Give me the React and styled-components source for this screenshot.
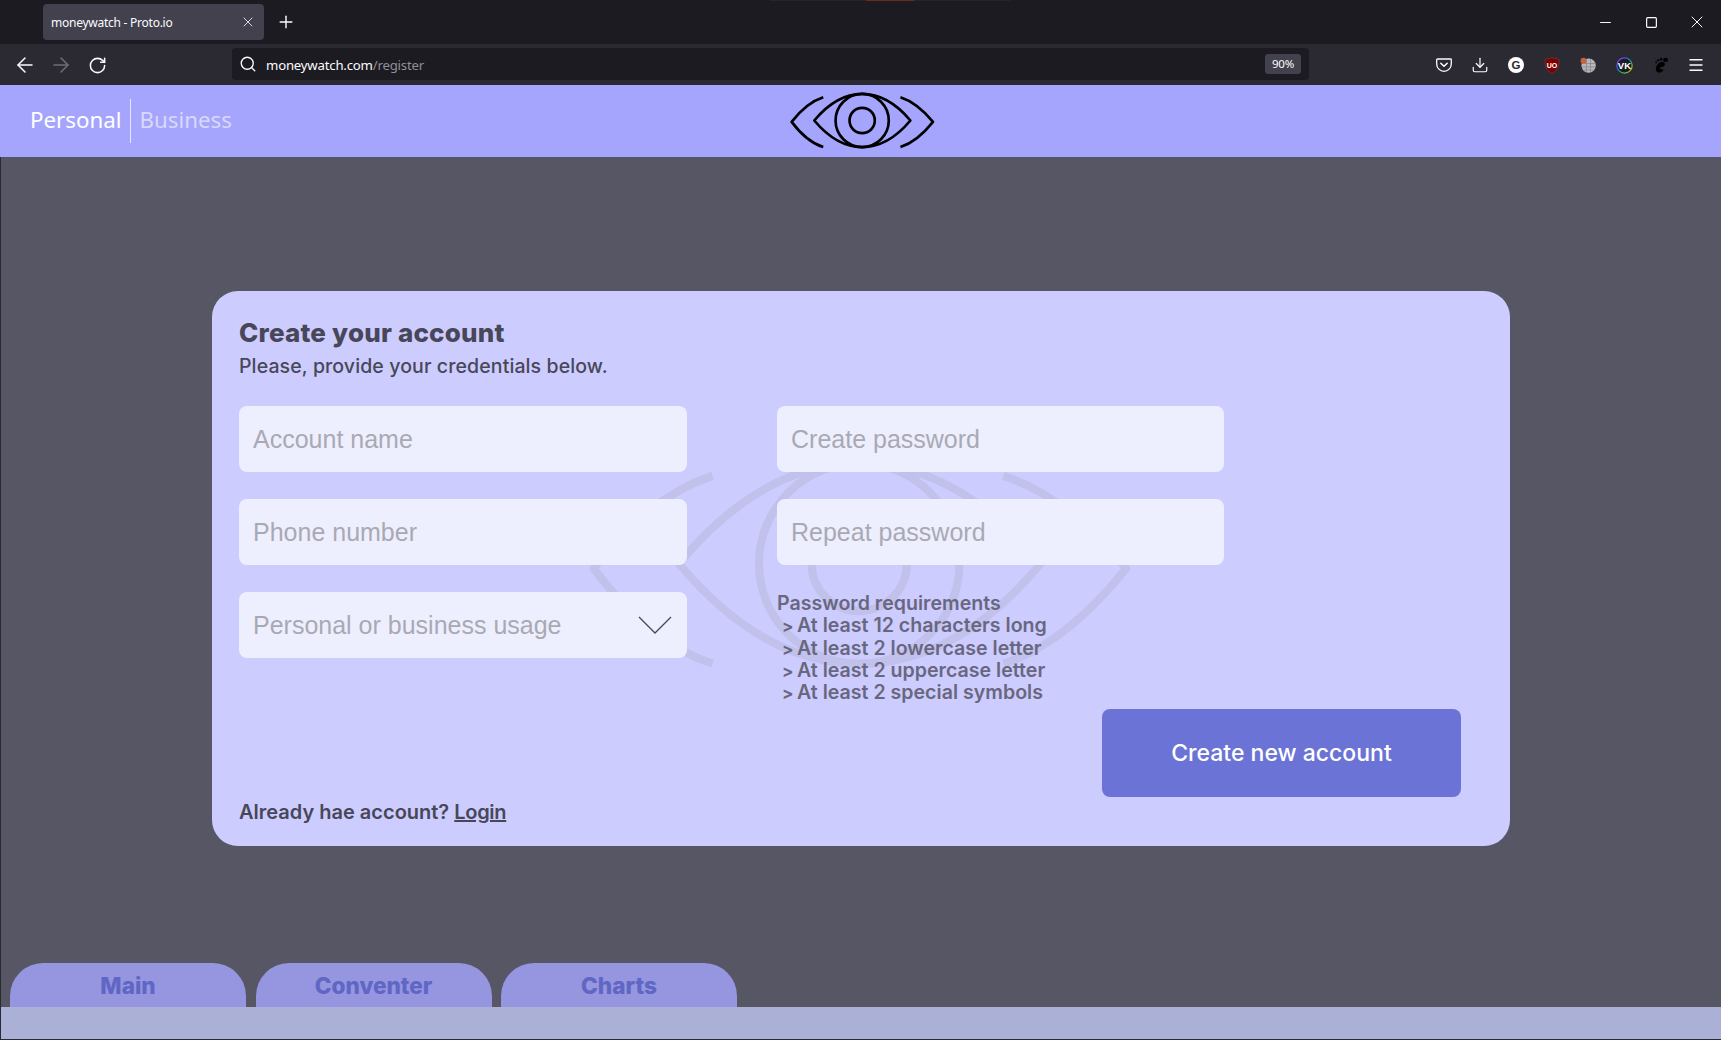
import React from 'react';
import styled, { createGlobalStyle } from 'styled-components';
import { ArrowLeft, ArrowRight, RotateCw, Search, X, Plus, Minus, Square, Menu, Download } from 'lucide-react';

const GlobalStyle = createGlobalStyle`
    html, body {
        margin: 0;
        padding: 0;
        background: #2b2a33;
    }
    * {
        box-sizing: border-box;
    }
`;

const sansStack = `Inter, "Liberation Sans", sans-serif`;
const chromeStack = `"Noto Sans", "Open Sans", sans-serif`;

const Window = styled.div`
    position: relative;
    display: flex;
    flex-direction: column;
    width: 1721px;
    height: 1040px;
    overflow: hidden;
    background: #2b2a33;
`;

const TabStrip = styled.div`
    position: relative;
    display: flex;
    align-items: center;
    height: 44px;
    padding-left: 43px;
    background: #1c1b22;
    color: #fbfbfe;
    font-family: ${chromeStack};
`;

const TopGlow = styled.div`
    position: absolute;
    top: 0;
    left: 770px;
    width: 240px;
    height: 1px;
    background: linear-gradient(to right, #26262a 0 96px, #6b2c1a 96px 144px, #26262a 144px);
`;

const BrowserTab = styled.div`
    display: flex;
    align-items: center;
    justify-content: space-between;
    width: 221px;
    height: 36px;
    padding: 0 8px 0 8px;
    background: #42414d;
    border-radius: 4px;
    font-size: 12px;
    letter-spacing: -0.25px;
`;

const NewTab = styled.div`
    display: flex;
    margin-left: 12px;
`;

const WindowControls = styled.div`
    display: flex;
    margin-left: auto;
    padding-right: 1px;
`;

const WindowButton = styled.div`
    display: flex;
    align-items: center;
    justify-content: center;
    width: 46px;
    height: 44px;
`;

const Toolbar = styled.div`
    display: flex;
    align-items: center;
    height: 40px;
    padding: 0 7px;
    background: #2b2a33;
    color: #fbfbfe;
    font-family: ${chromeStack};
`;

const ToolIcon = styled.div`
    display: flex;
    align-items: center;
    justify-content: center;
    width: 36px;
    height: 32px;
    margin-top: 2px;
    color: ${props => (props.$dim ? '#6f6e75' : '#fbfbfe')};
`;

const UrlBar = styled.div`
    display: flex;
    align-items: center;
    width: 1077px;
    height: 32px;
    margin: 0 117px;
    padding: 0 8px 0 7px;
    background: #1c1b22;
    border-radius: 4px;
    font-size: 13.2px;
    letter-spacing: -0.2px;
`;

const UrlText = styled.span`
    margin-left: 9px;
    padding-top: 2px;
    span {
        color: #8f8f96;
    }
`;

const ZoomBadge = styled.span`
    margin-left: auto;
    padding: 0 7px;
    height: 20px;
    line-height: 20px;
    background: #42414d;
    border-radius: 3px;
    font-size: 11.5px;
`;

const Header = styled.header`
    display: grid;
    grid-template-columns: 1fr auto 1fr;
    align-items: center;
    height: 72px;
    margin-top: 1px;
    padding-left: 4px;
    background: #a5a5fd;
    font-family: ${chromeStack};
`;

const Switcher = styled.div`
    display: flex;
    align-items: center;
    padding: 0 0 0 26px;
    font-size: 22.3px;
`;

const SwitchItem = styled.span`
    color: ${props => (props.$active ? '#ffffff' : '#d8d8fb')};
    padding-right: ${props => (props.$active ? '9px' : '0')};
    padding-left: ${props => (props.$active ? '0' : '8px')};
    border-right: ${props => (props.$active ? '1px solid #e6e6fe' : 'none')};
    height: 44px;
    line-height: 41px;
`;

const LogoSvg = styled.svg`
    display: block;
    width: 145px;
    height: 57px;
    margin-bottom: 2px;
`;

const Main = styled.main`
    flex: 1;
    padding: 134px 0 0 211px;
    background: #565664;
    border-left: 1px solid #2b2a33;
`;

const Card = styled.section`
    position: relative;
    display: flex;
    flex-direction: column;
    width: 1298px;
    height: 555px;
    padding: 27px 49px 22px 27px;
    background: #cdccfe;
    border-radius: 26px;
    font-family: ${sansStack};
    color: #484759;
`;

const Watermark = styled.svg`
    position: absolute;
    left: 375px;
    top: 166px;
    width: 547px;
    height: 213px;
`;

const Title = styled.h1`
    margin: 0 0 2px;
    font-size: 26px;
    line-height: 30px;
    font-weight: 800;
    letter-spacing: 0.2px;
`;

const Subtitle = styled.p`
    margin: 0 0 24px;
    height: 32px;
    font-size: 19.5px;
    line-height: 32px;
    font-weight: 500;
    letter-spacing: 0.11px;
`;

const FormGrid = styled.div`
    position: relative;
    display: grid;
    grid-template-columns: 448px 447px;
    column-gap: 90px;
`;

const FormColumn = styled.div`
    display: flex;
    flex-direction: column;
    gap: 27px;
`;

const Field = styled.input`
    display: block;
    width: 100%;
    height: 66px;
    padding: 0 14px;
    border: none;
    outline: none;
    border-radius: 8px;
    background: #eeeffe;
    font-family: "Liberation Sans", Arial, sans-serif;
    font-size: 25px;
    color: #484759;
    &::placeholder {
        color: #a9a9b4;
        opacity: 1;
    }
`;

const SelectField = styled.div`
    display: flex;
    align-items: center;
    justify-content: space-between;
    height: 66px;
    padding: 0 15px 0 14px;
    border-radius: 8px;
    background: #eeeffe;
    font-family: "Liberation Sans", Arial, sans-serif;
    font-size: 25px;
    color: #a9a9b4;
`;

const Requirements = styled.div`
    margin-top: 0;
    font-size: 19.6px;
    line-height: 22.3px;
    font-weight: 600;
    color: #696780;
`;

const RequirementItem = styled.div`
    height: 22.3px;
    padding-left: 5px;
    b {
        display: inline-block;
        width: 15px;
        font-size: 17px;
        font-weight: 700;
    }
`;

const FormFooter = styled.div`
    position: relative;
    display: flex;
    align-items: flex-end;
    justify-content: space-between;
    margin-top: auto;
`;

const LoginText = styled.div`
    font-size: 20px;
    line-height: 24px;
    font-weight: 600;
    a {
        letter-spacing: -0.3px;
        color: inherit;
        text-decoration: underline;
    }
`;

const SubmitButton = styled.button`
    width: 359px;
    height: 88px;
    margin-bottom: 27px;
    border: none;
    border-radius: 8px;
    background: #6b74d6;
    color: #ffffff;
    font-family: ${sansStack};
    font-size: 23px;
    font-weight: 500;
`;

const BottomTabs = styled.nav`
    display: flex;
    gap: 9.5px;
    height: 44px;
    padding-left: 9px;
    background: #565664;
    border-left: 1px solid #2b2a33;
`;

const BottomTab = styled.div`
    width: 236px;
    height: 44px;
    text-align: center;
    background: #9595e0;
    border-radius: 33px 33px 0 0;
    color: #5f66c4;
    font-family: ${sansStack};
    font-size: 22.6px;
    line-height: 45px;
    font-weight: 800;
`;

const Footer = styled.footer`
    height: 32px;
    margin-bottom: 1px;
    background: #abb1d6;
    border-left: 1px solid #2b2a33;
`;

const ShieldLabel = styled.text`
    font-family: "Liberation Sans", sans-serif;
    font-weight: 700;
`;

function EyeShape({ stroke, width }) {
    return (
        <g fill="none" stroke={stroke} strokeWidth={width} strokeLinejoin="round">
            <path d="M190 50Q140 66 95 124Q140 184 190 200" />
            <path d="M422 50Q472 66 520 124Q472 184 422 200" />
            <path d="M163 120Q230 40 307 40Q385 40 452 120Q385 200 307 200Q230 200 163 120Z" />
            <circle cx="307" cy="120" r="80" />
            <circle cx="307" cy="120" r="38" />
        </g>
    );
}

function PocketIcon() {
    return (
        <svg width="16" height="16" viewBox="0 0 16 16" fill="none" stroke="#fbfbfe" strokeWidth="1.3">
            <path d="M1.5 2h13a.8.8 0 0 1 .8.8V7a7.3 7.3 0 0 1-14.6 0V2.8a.8.8 0 0 1 .8-.8Z" />
            <path d="M4.8 6.2 8 9.2l3.2-3" strokeWidth="1.5" strokeLinecap="round" strokeLinejoin="round" />
        </svg>
    );
}

function GrammarlyIcon() {
    return (
        <svg width="16" height="16" viewBox="0 0 16 16">
            <circle cx="8" cy="8" r="8" fill="#ffffff" />
            <ShieldLabel x="8" y="12" fontSize="11.5" textAnchor="middle" fill="#2b2a33">G</ShieldLabel>
        </svg>
    );
}

function OriginIcon() {
    return (
        <svg width="16" height="17" viewBox="0 0 16 17">
            <path d="M8 .5 15 2.500c.3 7-1.500 11.500-7 14C2.500 14 .7 9.500 1 2.500Z" fill="#800000" stroke="#5a4a4a" strokeWidth=".6" />
            <ShieldLabel x="8" y="10.500" fontSize="7" textAnchor="middle" fill="#ffffff">UO</ShieldLabel>
        </svg>
    );
}

function GlobeIcon() {
    return (
        <svg width="16" height="16" viewBox="0 0 16 16">
            <circle cx="8.600" cy="8.600" r="7.200" fill="#b8b8bc" />
            <path d="M2 6.500h13M1.800 10h13.600M3.500 13h10M6.500 2v13M10.500 1.800v13.400" stroke="#7f7f85" strokeWidth=".7" />
            <circle cx="3.500" cy="3.800" r="3" fill="#c8623c" />
        </svg>
    );
}

function VkIcon() {
    return (
        <svg width="17" height="17" viewBox="0 0 16 16">
            <defs>
                <linearGradient id="ringGrad" x1="0" y1="0" x2="1" y2="1">
                    <stop offset="0" stopColor="#d126e8" />
                    <stop offset=".35" stopColor="#2563eb" />
                    <stop offset=".65" stopColor="#22c55e" />
                    <stop offset="1" stopColor="#f5b00b" />
                </linearGradient>
            </defs>
            <circle cx="8" cy="8" r="7.200" fill="#1c1b22" stroke="url(#ringGrad)" strokeWidth="1.200" />
            <ShieldLabel x="8" y="11" fontSize="9" textAnchor="middle" fill="#ffffff">VK</ShieldLabel>
        </svg>
    );
}

function FootIcon() {
    return (
        <svg width="17" height="17" viewBox="0 0 16 16" fill="#000000">
            <ellipse cx="12.800" cy="2.800" rx="2.400" ry="2" />
            <ellipse cx="8.600" cy="2" rx="1.200" ry="1.500" />
            <ellipse cx="5.800" cy="3" rx=".9" ry="1.200" />
            <ellipse cx="3.900" cy="5" rx=".8" ry="1" />
            <path d="M8 5c3.500-1 5 1.500 3.500 3.500-1 1.200-3.800.6-3.800 2 0 1.400 2.300 1.200 3.200.7-.5 2.800-3.200 4-5.200 3.300C3.500 13.700 3 10.500 4.300 8.400 5.300 6.800 6.500 5.500 8 5Z" />
        </svg>
    );
}

const requirementItems = [
    'At least 12 characters long',
    'At least 2 lowercase letter',
    'At least 2 uppercase letter',
    'At least 2 special symbols',
];

const bottomTabs = ['Main', 'Conventer', 'Charts'];

export default function App() {
    return (
        <Window>
            <GlobalStyle />
            <TabStrip>
                <TopGlow />
                <BrowserTab>
                    <span>moneywatch - Proto.io</span>
                    <X size={16} strokeWidth={1.5} color="#d8d8dc" />
                </BrowserTab>
                <NewTab><Plus size={20} strokeWidth={1.7} /></NewTab>
                <WindowControls>
                    <WindowButton><Minus size={17} strokeWidth={1.4} /></WindowButton>
                    <WindowButton><Square size={13} strokeWidth={1.2} absoluteStrokeWidth /></WindowButton>
                    <WindowButton><X size={20} strokeWidth={1.2} /></WindowButton>
                </WindowControls>
            </TabStrip>
            <Toolbar>
                <ToolIcon><ArrowLeft size={24} strokeWidth={1.5} /></ToolIcon>
                <ToolIcon $dim><ArrowRight size={24} strokeWidth={1.5} /></ToolIcon>
                <ToolIcon><RotateCw size={19} strokeWidth={1.9} /></ToolIcon>
                <UrlBar>
                    <Search size={18} strokeWidth={1.8} />
                    <UrlText>moneywatch.com<span>/register</span></UrlText>
                    <ZoomBadge>90%</ZoomBadge>
                </UrlBar>
                <ToolIcon><PocketIcon /></ToolIcon>
                <ToolIcon><Download size={18} strokeWidth={1.6} /></ToolIcon>
                <ToolIcon><GrammarlyIcon /></ToolIcon>
                <ToolIcon><OriginIcon /></ToolIcon>
                <ToolIcon><GlobeIcon /></ToolIcon>
                <ToolIcon><VkIcon /></ToolIcon>
                <ToolIcon><FootIcon /></ToolIcon>
                <ToolIcon><Menu size={18} strokeWidth={1.8} /></ToolIcon>
            </Toolbar>
            <Header>
                <Switcher>
                    <SwitchItem $active>Personal</SwitchItem>
                    <SwitchItem>Business</SwitchItem>
                </Switcher>
                <LogoSvg viewBox="90 35 436 170">
                    <EyeShape stroke="#000000" width={8} />
                </LogoSvg>
            </Header>
            <Main>
                <Card>
                    <Watermark viewBox="90 35 436 170">
                        <EyeShape stroke="#c1c1ec" width={6.5} />
                    </Watermark>
                    <Title>Create your account</Title>
                    <Subtitle>Please, provide your credentials below.</Subtitle>
                    <FormGrid>
                        <FormColumn>
                            <Field placeholder="Account name" />
                            <Field placeholder="Phone number" />
                            <SelectField>
                                Personal or business usage
                                <svg width="34" height="18" viewBox="0 0 34 18" fill="none" stroke="#484759" strokeWidth="1.3">
                                    <path d="M1 1 17 17 33 1" />
                                </svg>
                            </SelectField>
                        </FormColumn>
                        <FormColumn>
                            <Field placeholder="Create password" />
                            <Field placeholder="Repeat password" />
                            <Requirements>
                                Password requirements
                                {requirementItems.map(item => (
                                    <RequirementItem key={item}><b>&gt;</b>{item}</RequirementItem>
                                ))}
                            </Requirements>
                        </FormColumn>
                    </FormGrid>
                    <FormFooter>
                        <LoginText>Already hae account? <a href="#login">Login</a></LoginText>
                        <SubmitButton>Create new account</SubmitButton>
                    </FormFooter>
                </Card>
            </Main>
            <BottomTabs>
                {bottomTabs.map(name => (
                    <BottomTab key={name}>{name}</BottomTab>
                ))}
            </BottomTabs>
            <Footer />
        </Window>
    );
}
